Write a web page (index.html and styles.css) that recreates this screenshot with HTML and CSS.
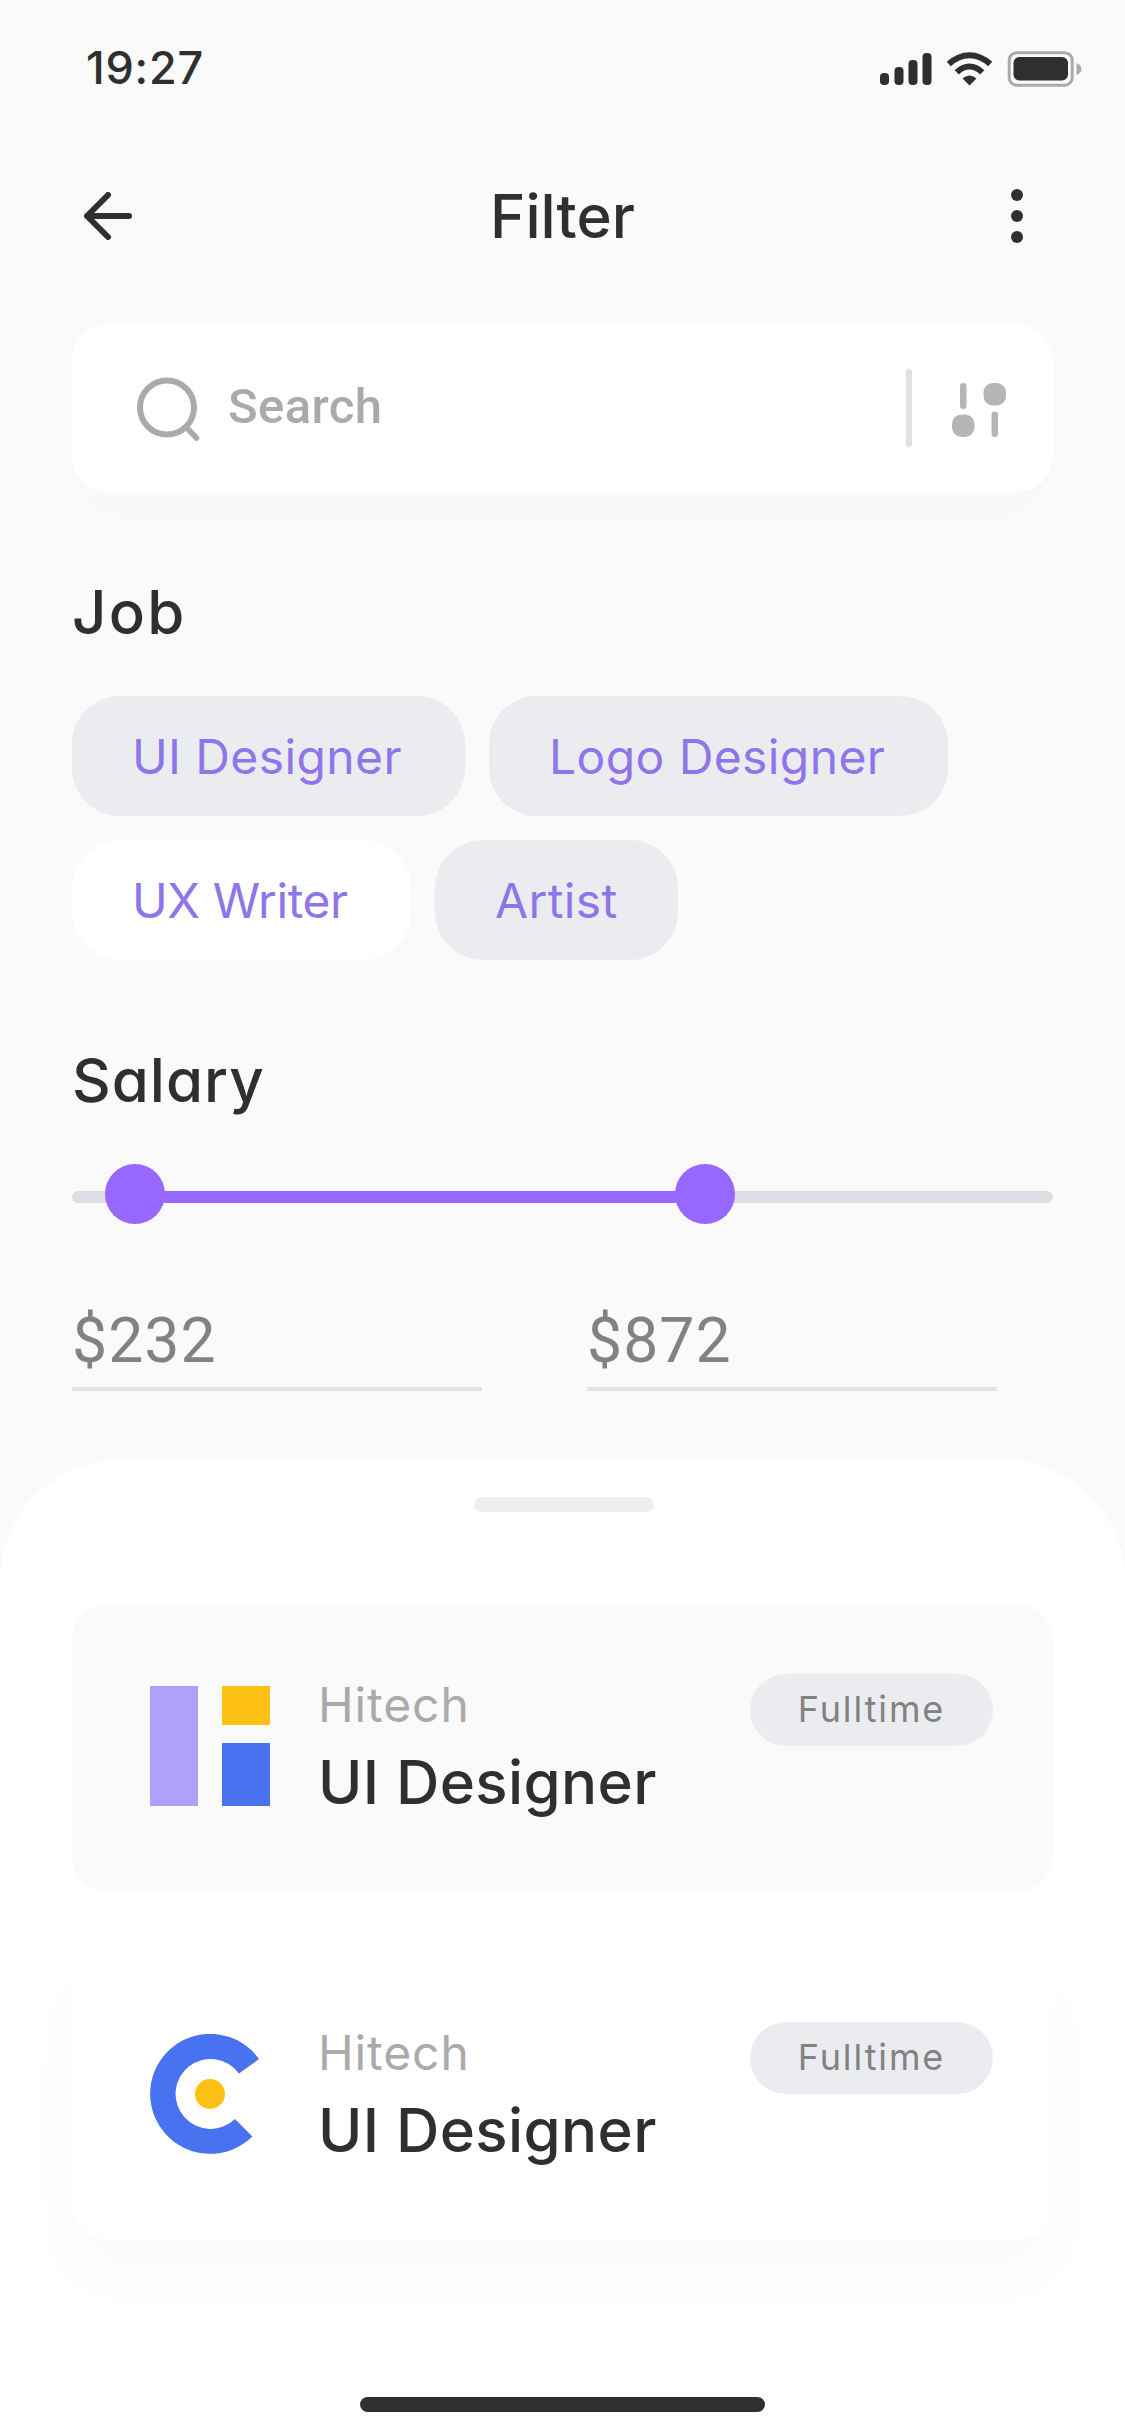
FILE: index.html
```html
<!DOCTYPE html>
<html lang="en">
  <head>
    <meta charset="UTF-8" />
    <meta name="viewport" content="width=device-width, initial-scale=1.0"/>
    <title>Filter</title>
    <link rel="stylesheet" href="styles.css">
  </head>
  <body>
    <!-- Status bar -->
    <div class="status-bar">
      <span class="time">19:27</span>
      <svg class="status-icons" width="202" height="36" viewBox="0 0 202 36">
        <g fill="#2f2f2f">
          <rect x="0" y="22" width="9" height="12" rx="4"/>
          <rect x="14.5" y="16" width="9" height="18" rx="4"/>
          <rect x="28.500" y="9" width="9" height="25" rx="4"/>
          <rect x="42.500" y="2" width="9" height="32" rx="4"/>
          <rect x="133.500" y="6" width="54.500" height="23.500" rx="6"/>
          <path d="M89.500 34.500 82.500 27.500Q89.500 21.500 96.500 27.500Z"/>
        </g>
        <g fill="none" stroke="#2f2f2f" stroke-width="6">
          <path d="M68.800 13Q78.500 4.200 89.500 4.200T110.200 13"/>
          <path d="M76.800 21.300Q82.500 15.500 89.500 15.500T102.200 21.300"/>
        </g>
        <rect x="129.200" y="1.700" width="63" height="32.500" rx="7.500" fill="none" stroke="#ababab" stroke-width="3"/>
        <path d="M196.500 12Q201.500 14 201.500 18T196.500 24Z" fill="#ababab"/>
      </svg>
    </div>

    <!-- Title bar -->
    <div class="header">
      <svg class="back" width="48" height="48" viewBox="0 0 48 48">
        <path d="M24 3 3 24 24 45M3 24H45" fill="none" stroke="#2f2f2f" stroke-width="6" stroke-linecap="round" stroke-linejoin="round"/>
      </svg>
      <h1>Filter</h1>
      <svg class="more" width="12" height="54" viewBox="0 0 12 54" fill="#2f2f2f">
        <circle cx="6" cy="6" r="6"/>
        <circle cx="6" cy="27" r="6"/>
        <circle cx="6" cy="48" r="6"/>
      </svg>
    </div>

    <div class="search">
      <svg width="63" height="65" viewBox="0 0 63 65" fill="none" stroke="#aaaaaa" stroke-width="6" stroke-linecap="round">
        <circle cx="30" cy="31.500" r="27"/>
        <path d="M50 52 59.500 62" stroke-width="5.500"/>
      </svg>
      <span class="search-text">Search</span>
      <span class="divider"></span>
      <svg class="sort" width="54" height="54" viewBox="0 0 54 54" fill="#b5b5b5">
        <rect x="8" y="0" width="6.500" height="26" rx="3"/>
        <rect x="0" y="31.500" width="22.500" height="22.500" rx="9.500"/>
        <rect x="31.500" y="0" width="22.500" height="22.500" rx="9.500"/>
        <rect x="39.500" y="28.500" width="6.500" height="25.500" rx="3"/>
      </svg>
    </div>

    <h2 class="job-title">Job</h2>
    <div class="tags">
      <span class="tag ui">UI Designer</span>
      <span class="tag logo">Logo Designer</span>
      <span class="tag ux active">UX Writer</span>
      <span class="tag artist">Artist</span>
    </div>

    <h2 class="salary-title">Salary</h2>
    <div class="slider">
      <div class="range"></div>
      <div class="knob min"></div>
      <div class="knob max"></div>
    </div>
    <div class="amounts">
      <div class="amount">$232</div>
      <div class="amount">$872</div>
    </div>

    <!-- Results sheet -->
    <div class="sheet">
      <div class="handle"></div>
      <div class="card gray">
        <svg width="120" height="120" viewBox="0 0 120 120">
          <rect width="48" height="120" fill="#b09ffb"/>
          <rect x="72" width="48" height="39" fill="#fdc113"/>
          <rect x="72" y="57" width="48" height="63" fill="#4872ef"/>
        </svg>
        <div class="info">
          <div class="company">Hitech</div>
          <div class="position">UI Designer</div>
        </div>
        <span class="badge">Fulltime</span>
      </div>
      <div class="card white">
        <svg width="120" height="120" viewBox="0 0 120 120">
          <path d="M109 25A60 60 0 1 0 102.400 102.400L85 85A35 35 0 1 1 89 39.500Z" fill="#4872ef"/>
          <circle cx="60" cy="60" r="15" fill="#fdc113"/>
        </svg>
        <div class="info">
          <div class="company">Hitech</div>
          <div class="position">UI Designer</div>
        </div>
        <span class="badge">Fulltime</span>
      </div>
      <div class="home-bar"></div>
    </div>
  </body>
</html>
```
FILE: styles.css
```css
* {
  box-sizing: border-box;
}
body {
  margin: 0;
  width: 1125px;
  height: 2436px;
  overflow: hidden;
  display: flex;
  flex-direction: column;
  background-color: #fafafa;
  color: #2f2f2f;
  font-family: Inter, sans-serif;
  font-feature-settings: "cv11";
}
svg {
  display: block;
  flex: none;
}
h1, h2 {
  margin: 0;
  font-weight: 500;
  font-size: 60px;
  line-height: 80px;
}
.status-bar {
  display: flex;
  justify-content: space-between;
  height: 132px;
  padding: 51px 43px 0 86px;
}
.time {
  font-size: 45px;
  font-weight: 550;
  line-height: 34px;
  letter-spacing: 0.8px;
}
.header {
  display: flex;
  align-items: center;
  justify-content: space-between;
  height: 168px;
  padding: 0 102px 0 84px;
}
.header h1 {
  margin-right: 18px;
}
.search {
  display: flex;
  align-items: center;
  width: 981px;
  height: 168px;
  margin: 24px 72px 0;
  padding: 0 47px 0 65px;
  background-color: #fff;
  border-radius: 36px;
  box-shadow: 0 30px 60px rgba(0, 0, 0, 0.008);
}
.search-text {
  flex: 1;
  margin: 0 0 4px 28px;
  font-family: Roboto, sans-serif;
  font-size: 49px;
  font-weight: 500;
  letter-spacing: 0.4px;
  color: #aaaaaa;
}
.divider {
  width: 6px;
  height: 78px;
  margin-right: 40px;
  border-radius: 3px;
  background-color: #dfe1e4;
}
.sort {
  margin-top: 3px;
}
.job-title {
  margin: 80px 72px 0;
  letter-spacing: 2.2px;
}
.tags {
  display: flex;
  flex-wrap: wrap;
  gap: 24px;
  margin: 44px 72px 0;
}
.tag {
  height: 120px;
  padding-left: 60px;
  border-radius: 48px;
  background-color: #ebecef;
  color: #8f75ea;
  font-size: 48px;
  line-height: 121px;
  letter-spacing: 0.4px;
  white-space: nowrap;
}
.tag.active {
  background-color: #fff;
  letter-spacing: -0.4px;
}
.ui { width: 393px; }
.logo { width: 459px; }
.ux { width: 339px; }
.artist { width: 243px; }
.salary-title {
  margin: 80px 72px 0;
  letter-spacing: 1px;
}
.slider {
  position: relative;
  width: 981px;
  height: 12px;
  margin: 71px 72px 0;
  border-radius: 6px;
  background-color: #dddde3;
}
.range {
  width: 570px;
  height: 12px;
  margin-left: 62px;
  background-color: #9768ff;
}
.knob {
  position: absolute;
  top: -27px;
  width: 60px;
  height: 60px;
  border-radius: 50%;
  background-color: #9768ff;
}
.min { left: 33px; }
.max { left: 603px; }
.amounts {
  display: flex;
  gap: 105px;
  margin: 94px 72px 0;
}
.amount {
  width: 410px;
  height: 94px;
  border-bottom: 4px solid #e0e2e4;
  color: #828282;
  font-family: Roboto, sans-serif;
  font-size: 62.5px;
  font-weight: 450;
  line-height: 88px;
  letter-spacing: 1px;
}
.sheet {
  display: flex;
  flex: 1;
  flex-direction: column;
  align-items: center;
  margin-top: 69px;
  border-radius: 120px 120px 0 0;
  background-color: #fff;
}
.handle {
  width: 180px;
  height: 15px;
  margin: 37px 0 92px 3px;
  border-radius: 7px;
  background-color: #edeeef;
}
.card {
  display: flex;
  width: 981px;
  height: 288px;
  padding: 82px 60px 0 78px;
  border-radius: 36px;
}
.gray {
  background-color: #fafafa;
}
.white {
  margin-top: 60px;
  box-shadow: 0 36px 60px rgba(0, 0, 0, 0.022);
}
.info {
  flex: 1;
  margin-left: 48px;
}
.company {
  margin-top: -17px;
  color: #aaaaaa;
  font-size: 48px;
  line-height: 72px;
  letter-spacing: 0.9px;
}
.position {
  margin-top: 1px;
  font-size: 60px;
  font-weight: 500;
  line-height: 80px;
  letter-spacing: 0.4px;
  white-space: nowrap;
}
.badge {
  width: 243px;
  height: 72px;
  margin-top: -12px;
  border-radius: 36px;
  background-color: #ebecef;
  color: #828282;
  font-size: 36px;
  line-height: 70px;
  letter-spacing: 1.9px;
  text-align: center;
}
.home-bar {
  width: 405px;
  height: 15px;
  margin: auto 0 24px;
  border-radius: 8px;
  background-color: #2f2f2f;
}
```
